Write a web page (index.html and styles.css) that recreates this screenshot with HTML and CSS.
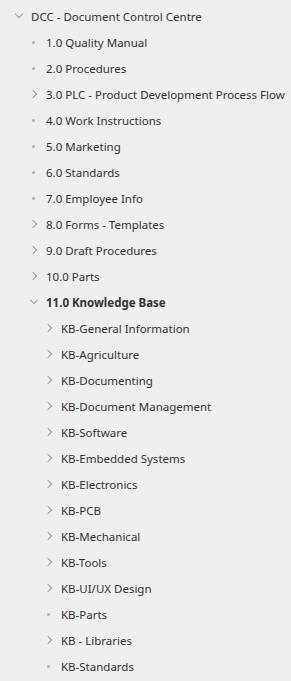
FILE: index.html
```html
<!DOCTYPE html>
<html lang="en">
<head>
    <meta charset="UTF-8">
    <meta name="viewport" content="width=device-width, initial-scale=1.0">
    <title>Document Control Centre</title>
    <link rel="stylesheet" href="styles.css">
</head>
<body>

    <ul class="tree">
        <li>
            <div class="row lvl0"><span class="icon chev open"></span><span class="label">DCC - Document Control Centre</span></div>
            <ul>
                <li><div class="row lvl1"><span class="icon dot"></span><span class="label">1.0 Quality Manual</span></div></li>
                <li><div class="row lvl1"><span class="icon dot"></span><span class="label">2.0 Procedures</span></div></li>
                <li><div class="row lvl1"><span class="icon chev"></span><span class="label">3.0 PLC - Product Development Process Flow</span></div></li>
                <li><div class="row lvl1"><span class="icon dot"></span><span class="label">4.0 Work Instructions</span></div></li>
                <li><div class="row lvl1"><span class="icon dot"></span><span class="label">5.0 Marketing</span></div></li>
                <li><div class="row lvl1"><span class="icon dot"></span><span class="label">6.0 Standards</span></div></li>
                <li><div class="row lvl1"><span class="icon dot"></span><span class="label">7.0 Employee Info</span></div></li>
                <li><div class="row lvl1"><span class="icon chev"></span><span class="label">8.0 Forms - Templates</span></div></li>
                <li><div class="row lvl1"><span class="icon chev"></span><span class="label">9.0 Draft Procedures</span></div></li>
                <li><div class="row lvl1"><span class="icon chev"></span><span class="label">10.0 Parts</span></div></li>
                <li>
                    <div class="row lvl1 active"><span class="icon chev open"></span><span class="label">11.0 Knowledge Base</span></div>
                    <ul>
                        <li><div class="row lvl2"><span class="icon chev"></span><span class="label">KB-General Information</span></div></li>
                        <li><div class="row lvl2"><span class="icon chev"></span><span class="label">KB-Agriculture</span></div></li>
                        <li><div class="row lvl2"><span class="icon chev"></span><span class="label">KB-Documenting</span></div></li>
                        <li><div class="row lvl2"><span class="icon chev"></span><span class="label">KB-Document Management</span></div></li>
                        <li><div class="row lvl2"><span class="icon chev"></span><span class="label">KB-Software</span></div></li>
                        <li><div class="row lvl2"><span class="icon chev"></span><span class="label">KB-Embedded Systems</span></div></li>
                        <li><div class="row lvl2"><span class="icon chev"></span><span class="label">KB-Electronics</span></div></li>
                        <li><div class="row lvl2"><span class="icon chev"></span><span class="label">KB-PCB</span></div></li>
                        <li><div class="row lvl2"><span class="icon chev"></span><span class="label">KB-Mechanical</span></div></li>
                        <li><div class="row lvl2"><span class="icon chev"></span><span class="label">KB-Tools</span></div></li>
                        <li><div class="row lvl2"><span class="icon chev"></span><span class="label">KB-UI/UX Design</span></div></li>
                        <li><div class="row lvl2"><span class="icon dot"></span><span class="label">KB-Parts</span></div></li>
                        <li><div class="row lvl2"><span class="icon chev"></span><span class="label">KB - Libraries</span></div></li>
                        <li><div class="row lvl2"><span class="icon dot"></span><span class="label">KB-Standards</span></div></li>
                    </ul>
                </li>
            </ul>
        </li>
    </ul>

</body>
</html>
```

FILE: styles.css
```css
html, body {
    background: #eeeeee;
}
body {
    font-family: "Noto Sans", "Open Sans", sans-serif;
    font-size: 11.5px;
    color: #333333;
    margin: 0;
    padding-top: 3px;
}
.tree, .tree ul {
    list-style: none;
    margin: 0;
    padding: 0;
}
.row {
    display: flex;
    align-items: center;
    height: 26px;
    white-space: nowrap;
}
.lvl0 { padding-left: 11px; }
.lvl1 { padding-left: 26px; }
.lvl2 { padding-left: 41px; }
.icon {
    width: 16px;
    height: 16px;
    margin-right: 4px;
    position: relative;
    flex: none;
}
.dot::before {
    content: "";
    position: absolute;
    left: 6px;
    top: 7px;
    width: 3px;
    height: 3px;
    border-radius: 50%;
    background: #b0b0b0;
}
.chev::before {
    content: "";
    position: absolute;
    left: 4px;
    top: 5px;
    width: 5px;
    height: 5px;
    border-right: 1px solid #9a9a9a;
    border-bottom: 1px solid #9a9a9a;
    transform: rotate(-45deg);
}
.chev.open::before {
    left: 5px;
    top: 3px;
    transform: rotate(45deg);
}
.active .label {
    font-weight: bold;
}
```
